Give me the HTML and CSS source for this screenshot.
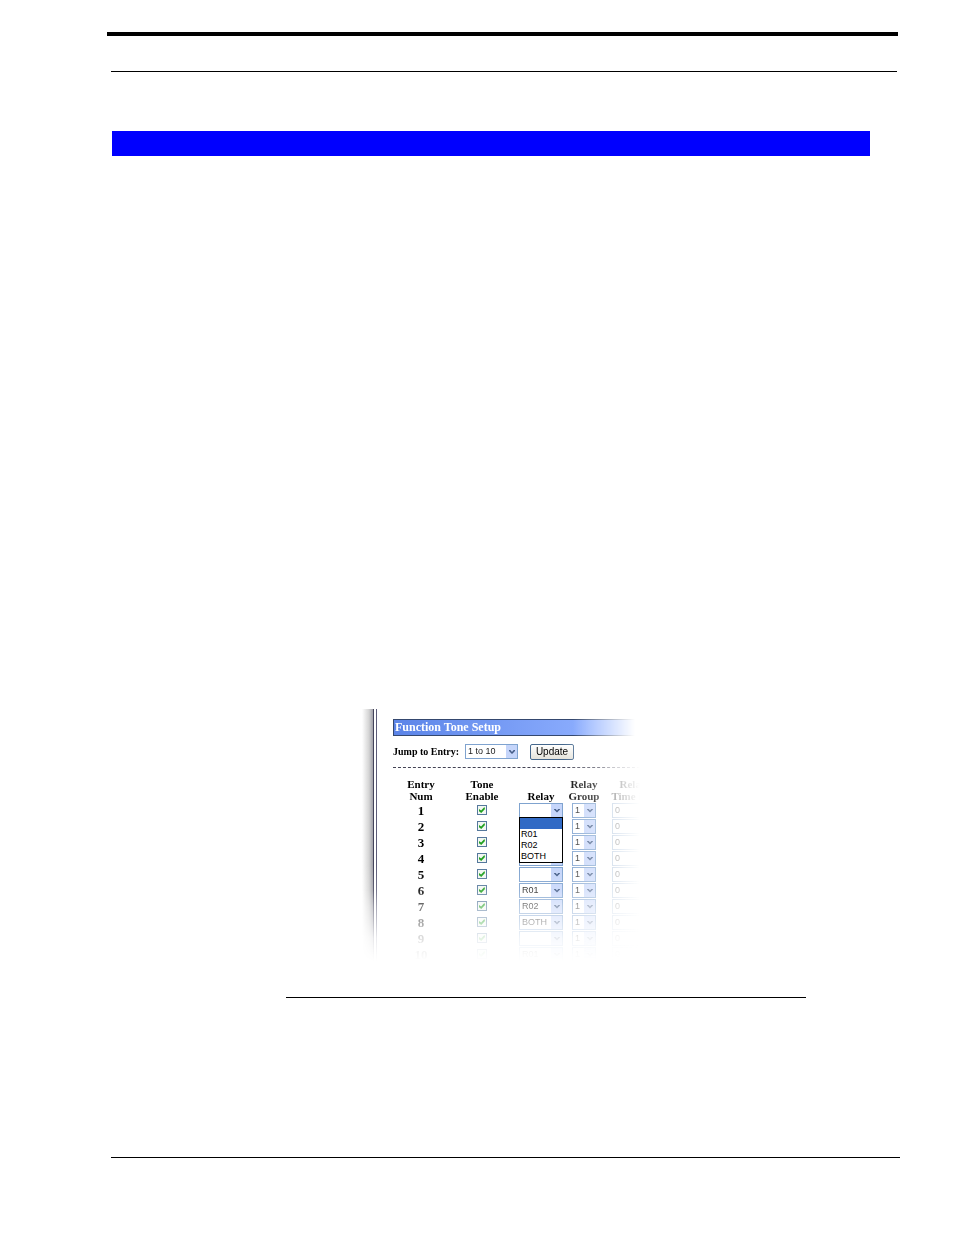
FILE: index.html
```html
<!DOCTYPE html>
<html lang="en">
<head>
<meta charset="utf-8">
<title>Function Tone Setup</title>
<link rel="stylesheet" href="styles.css">
</head>
<body>
<main class="page">
  <div class="top-bar"></div>
  <div class="header-rule"></div>
  <div class="section-band"></div>
  <section class="figure">
    <div class="frame"></div>
    <div class="screen">
      <h1 class="title">Function Tone Setup</h1>
      <form class="jump fade">
        <label for="jump">Jump to Entry:</label>
        <span class="drop drop-jump"><select id="jump"><option>1 to 10</option></select></span>
        <button type="button">Update</button>
      </form>
      <table class="tones fade">
        <colgroup><col class="c-num"><col class="c-tone"><col class="c-relay"><col class="c-group"><col class="c-time"></colgroup>
        <thead>
          <tr><th>Entry<br>Num</th><th>Tone<br>Enable</th><th>Relay</th><th>Relay<br>Group</th><th>Relay<br>Time in s</th></tr>
        </thead>
        <tbody id="entries"></tbody>
      </table>
    </div>
  </section>
  <div class="figure-rule"></div>
  <div class="footer-rule"></div>
</main>
<script src="entries.js"></script>
</body>
</html>
```
FILE: entries.js
```js
const relays = ["", "", "", "", "", "R01", "R02", "BOTH", "", "R01"];
const menu = `<ul class="menu" role="listbox" aria-label="Relay choices">
  <li class="chosen" role="option" aria-selected="true"></li>
  <li role="option">R01</li><li role="option">R02</li><li role="option">BOTH</li></ul>`;
document.getElementById("entries").innerHTML = relays.map((relay, i) => {
  const n = i + 1;
  return `<tr>
    <td class="num">${n}</td>
    <td><input type="checkbox" checked aria-label="Tone enable ${n}"></td>
    <td><span class="drop drop-relay"><select aria-label="Relay ${n}"><option>${relay}</option></select>${i === 0 ? menu : ""}</span></td>
    <td><span class="drop drop-group"><select aria-label="Relay group ${n}"><option>1</option></select></span></td>
    <td><input class="time" type="text" value="0" aria-label="Relay time ${n}"></td>
  </tr>`;
}).join("");
```
FILE: styles.css
```css
* { box-sizing: border-box; }
body { margin: 0; background: #fff; color: #000; font-family: "Liberation Serif", serif; }
.page { display: flex; flex-direction: column; min-height: 100vh; padding: 32px 54px 77px 111px; }
.top-bar { height: 4px; margin: 0 2px 0 -4px; background: #000; }
.header-rule { height: 1px; margin: 35px 3px 0 0; background: #000; }
.section-band { height: 25px; margin: 59px 30px 0 1px; background: #00f; }

.figure {
  display: flex; width: 304px; height: 253px; margin: 553px 0 0 251px; overflow: hidden;
  mask-image: linear-gradient(to bottom, #000 156px, rgba(0,0,0,.85) 181px, rgba(0,0,0,.55) 197px, rgba(0,0,0,.35) 213px, rgba(0,0,0,.13) 229px, rgba(0,0,0,.03) 245px, transparent);
}
.frame {
  flex: none; width: 15px;
  background: linear-gradient(to right, #fff 0, #d4d4d4 7px, #a0a0a8 11px, #45455c 11px, #45455c 12px, #fff 12px, #fff 14px, #5c5c78 14px);
}
.screen { flex: none; width: 289px; padding: 10px 0 0 16px; }
.title {
  width: 243px; height: 17px; margin: 0; padding-left: 1px; border: 1px solid #34486f;
  background: linear-gradient(to right, #5b84e8, #8eafff 200px);
  color: #fff; font-size: 12px; line-height: 15px; font-weight: bold;
  mask-image: linear-gradient(to right, #000 180px, transparent 242px);
}
.fade { mask-image: linear-gradient(to right, #000 170px, rgba(0,0,0,.8) 183px, rgba(0,0,0,.65) 205px, rgba(0,0,0,.3) 220px, transparent 247px); }
.jump {
  display: flex; align-items: center; width: 247px; height: 32px;
  font-size: 10px; font-weight: bold; border-bottom: 1px dashed #445;
}
.jump label { width: 72px; white-space: nowrap; }
.jump button {
  width: 44px; height: 16px; margin-left: 12px; padding: 0; border: 1px solid #45678c; border-radius: 2px;
  background: linear-gradient(#fff, #e4e2da); font: 10px/12px "Liberation Sans", sans-serif;
}

.drop { position: relative; display: block; height: 15px; margin: 0 auto; }
.drop-jump { width: 53px; margin: 0; }
.drop-relay { width: 44px; }
.drop-group { width: 24px; }
.drop select {
  appearance: none; display: block; width: 100%; height: 100%; padding: 0 0 0 2px;
  border: 1px solid #7fa3cf; border-radius: 0; background: #fff;
  color: #222; font: 9px/13px "Liberation Sans", sans-serif;
}
.drop::before {
  content: ""; position: absolute; top: 1px; right: 1px; bottom: 1px; width: 11px;
  background: #c5d5fa; pointer-events: none;
}
.drop::after {
  content: ""; position: absolute; top: 6px; right: 3px; width: 6px; height: 4px;
  background: #465e88; clip-path: polygon(0 0, 22% 0, 50% 50%, 78% 0, 100% 0, 100% 25%, 50% 100%, 0 25%);
  pointer-events: none;
}

.tones { width: 272px; margin-top: 10px; table-layout: fixed; border-collapse: collapse; }
.c-num { width: 56px; }
.c-tone { width: 66px; }
.c-relay { width: 52px; }
.c-group { width: 34px; }
.c-time { width: 64px; }
.tones th { padding: 0; vertical-align: bottom; font-size: 11px; line-height: 12px; white-space: nowrap; }
.tones td { height: 16px; padding: 0; text-align: center; vertical-align: middle; line-height: 15px; }
.tones .num { font-size: 13px; font-weight: bold; }
.tones input { display: block; margin: 0 auto; appearance: none; border: 1px solid #55789c; background: #f2f7f2; }
.tones input[type="checkbox"] { position: relative; width: 10px; height: 10px; }
.tones input[type="checkbox"]::before {
  content: ""; position: absolute; inset: 1px; background: #21a121;
  clip-path: polygon(0 35%, 35% 60%, 90% 0, 100% 35%, 38% 100%, 0 70%);
}
.tones .time {
  width: 42px; height: 15px; padding: 0 2px; border-color: #8aa9cc; border-radius: 0; background: #fff;
  font: 9px/13px "Liberation Sans", sans-serif;
}
.drop select, .time { text-align: left; }
.menu {
  position: absolute; z-index: 1; top: 14px; left: 0; width: 44px; margin: 0; padding: 0;
  list-style: none; border: 1px solid #000; background: #fff;
  text-align: left; font: 9px/11px "Liberation Sans", sans-serif;
}
.menu li { height: 11px; padding-left: 1px; }
.menu .chosen { background: #316ac5; }

.figure-rule { height: 1px; margin: 35px 94px 0 175px; background: #000; }
.footer-rule { height: 1px; margin-top: auto; background: #000; }
```
